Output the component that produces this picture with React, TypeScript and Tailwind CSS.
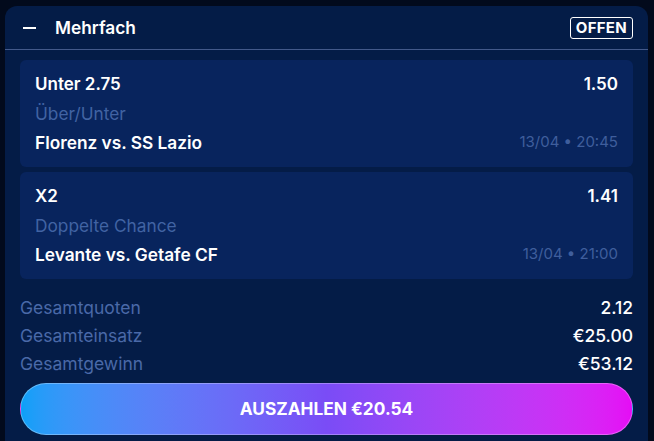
import React from "react";

const selections = [
  { pick: "Unter 2.75", market: "Über/Unter", match: "Florenz vs. SS Lazio", odds: "1.50", date: "13/04 • 20:45" },
  { pick: "X2", market: "Doppelte Chance", match: "Levante vs. Getafe CF", odds: "1.41", date: "13/04 • 21:00" },
];

const totals = [
  { label: "Gesamtquoten", value: "2.12" },
  { label: "Gesamteinsatz", value: "€25.00" },
  { label: "Gesamtgewinn", value: "€53.12" },
];

export default function App() {
  return (
    <div
      className="w-[654px] h-[441px] overflow-hidden bg-[#020a1c] pl-[5px] pt-[6px]"
      style={{ fontFamily: "Inter, 'Noto Sans', sans-serif" }}
    >
      <div className="w-[643px] h-[460px] rounded-t-[12px] bg-[#041c47]">
        <div className="flex h-[44px] items-center justify-between border-b border-[#43598a] pl-[18px] pr-[15px]">
          <div className="flex items-center">
            <div className="h-[2px] w-[13px] bg-white" />
            <span className="ml-[19px] text-[17.3px] font-semibold text-white">Mehrfach</span>
          </div>
          <div className="flex h-[22px] items-center rounded-[3px] border border-white px-[5px] text-[15px] font-bold leading-none tracking-[0.3px] text-white">
            OFFEN
          </div>
        </div>
        <div className="px-[15px] pt-[10px]">
          <div className="flex flex-col gap-[5px]">
            {selections.map((s) => (
              <div key={s.pick} className="rounded-[6px] bg-[#08245d] px-[15px] py-[10px]">
                <div className="flex h-[29px] items-center justify-between text-[17px] font-semibold text-white">
                  <span>{s.pick}</span>
                  <span>{s.odds}</span>
                </div>
                <div className="flex h-[29px] items-center text-[17.3px] text-[#4163a3]">{s.market}</div>
                <div className="flex h-[29px] items-center justify-between">
                  <span className="text-[17.3px] font-semibold text-white">{s.match}</span>
                  <span className="text-[15px] text-[#3f5e9c]">{s.date}</span>
                </div>
              </div>
            ))}
          </div>
          <div className="mt-[15px] flex flex-col">
            {totals.map((t) => (
              <div key={t.label} className="flex h-[28px] items-center justify-between text-[17.5px]">
                <span className="text-[#4a69a8]">{t.label}</span>
                <span className="font-medium text-white">{t.value}</span>
              </div>
            ))}
          </div>
          <button className="mt-[5px] flex h-[52px] w-full items-center justify-center rounded-full border border-white/30 bg-gradient-to-r from-[#0aa0f8] via-[#7a4cf6] to-[#e50cf5] text-[17.3px] font-bold text-white">
            AUSZAHLEN €20.54
          </button>
        </div>
      </div>
    </div>
  );
}
